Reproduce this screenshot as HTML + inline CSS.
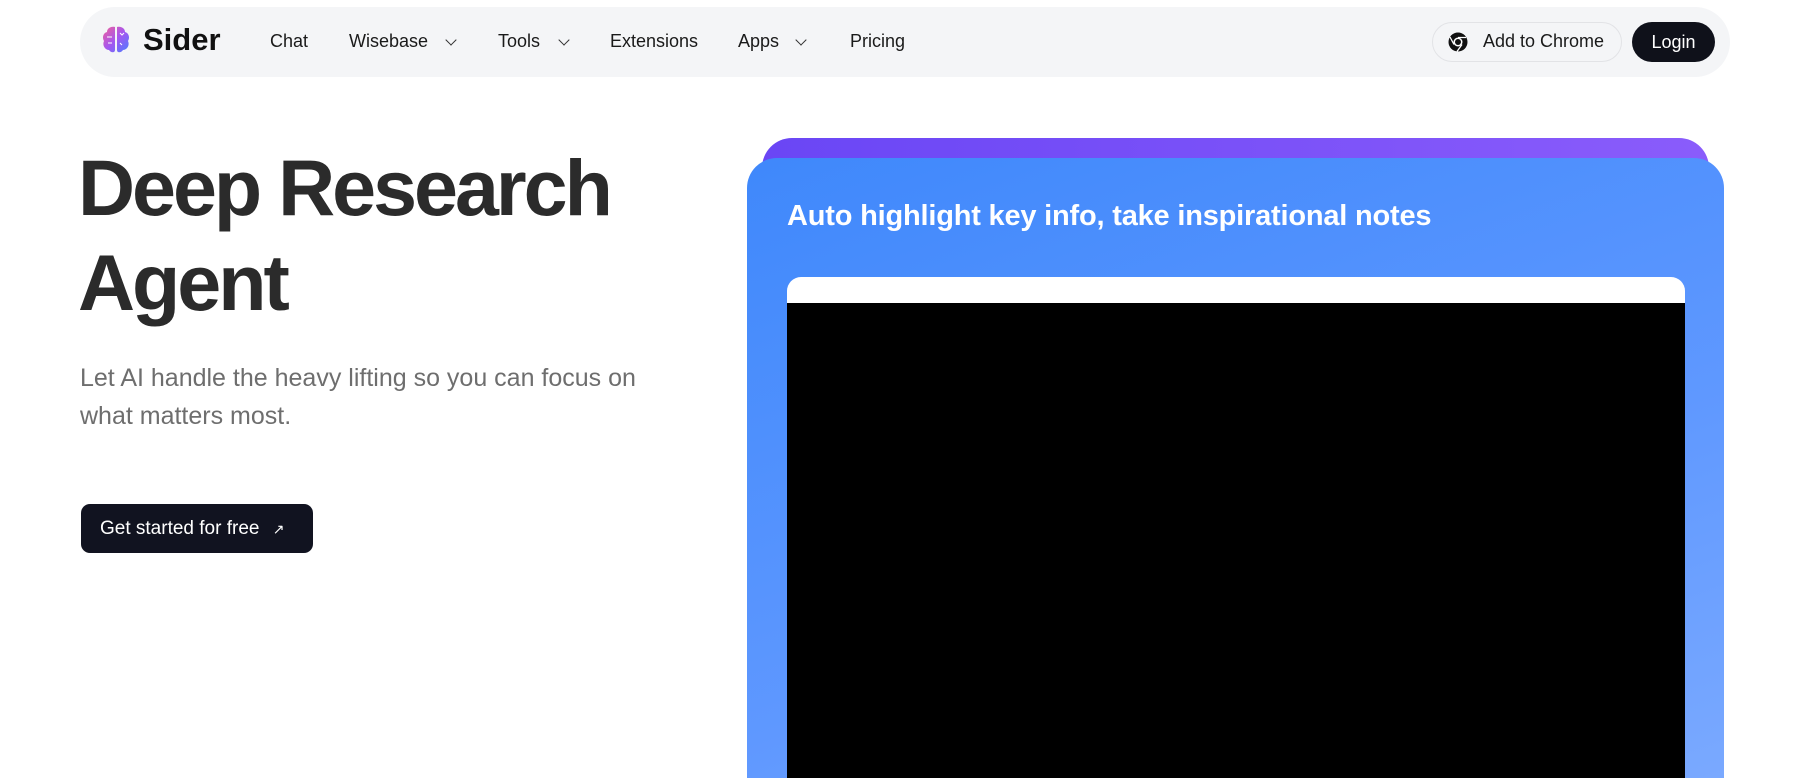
<!DOCTYPE html>
<html><head><meta charset="utf-8"><style>
*{margin:0;padding:0;box-sizing:border-box}
html,body{width:1796px;height:778px;overflow:hidden}
body{background:#fff;font-family:"Liberation Sans",sans-serif;color:#111;position:relative}
.nav{position:absolute;left:80px;top:7px;width:1650px;height:70px;background:#f4f5f7;border-radius:35px}
.a{position:absolute;font-size:18px;color:#1a1a1a;top:31px}
.chev{position:absolute;top:36px;width:8px;height:8px;border-right:1.6px solid #333;border-bottom:1.6px solid #333;transform:rotate(45deg)}
.h1{position:absolute;left:78px;top:140px;font-size:79px;font-weight:bold;letter-spacing:-3px;line-height:95px;color:#2b2b2b}
.sub{position:absolute;left:80px;top:359px;font-size:25px;line-height:38px;color:#6e6e6e;width:700px}
.btn{position:absolute;left:81px;top:504px;width:232px;height:49px;background:#111320;border-radius:9px;color:#fff;font-size:19px;line-height:49px;padding-left:19px}
</style></head><body>
<div class="nav"></div>
<svg style="position:absolute;left:102px;top:25px" width="28" height="28" viewBox="0 0 28 28"><defs><linearGradient id="g" x1="0" y1="0" x2="1" y2="1"><stop offset="0" stop-color="#f0609a"/><stop offset=".5" stop-color="#a457f0"/><stop offset="1" stop-color="#4a7dff"/></linearGradient></defs><path d="M13 2C8 1 5 4 5 7 1 8 0 13 2 16 0 20 3 25 7 25c2 3 6 3 6 0zM15 2c5-1 8 2 8 5 4 1 5 6 3 9 2 4-1 9-5 9-2 3-6 3-6 0z" fill="url(#g)"/><path d="M5 12h5M18 8l2 2 2-2M6 18h4M18 18l2 2" stroke="#fff" stroke-width="1" fill="none"/></svg>
<div style="position:absolute;left:143px;top:22px;font-size:31px;font-weight:bold;color:#111">Sider</div>
<div class="a" style="left:270px">Chat</div>
<div class="a" style="left:349px">Wisebase</div><div class="chev" style="left:447px"></div>
<div class="a" style="left:498px">Tools</div><div class="chev" style="left:560px"></div>
<div class="a" style="left:610px">Extensions</div>
<div class="a" style="left:738px">Apps</div><div class="chev" style="left:797px"></div>
<div class="a" style="left:850px">Pricing</div>
<div style="position:absolute;left:1432px;top:22px;width:190px;height:40px;border:1px solid #e2e3e6;border-radius:20px"></div>
<svg style="position:absolute;left:1448px;top:32px" width="20" height="20" viewBox="0 0 20 20"><circle cx="10" cy="10" r="9.5" fill="#111"/><circle cx="10" cy="10" r="4.5" fill="#fff"/><circle cx="10" cy="10" r="3" fill="#111"/><path d="M10 5.5h8M6 12.5L2 5M14 12.5l-5 7" stroke="#fff" stroke-width="1.3"/></svg>
<div class="a" style="left:1483px;top:31px">Add to Chrome</div>
<div style="position:absolute;left:1632px;top:22px;width:83px;height:40px;background:#0f111a;border-radius:20px;color:#fff;font-size:18px;line-height:40px;text-align:center">Login</div>
<div class="h1">Deep Research<br>Agent</div>
<div class="sub">Let AI handle the heavy lifting so you can focus on<br>what matters most.</div>
<div class="btn">Get started for free <span style="font-size:14px;margin-left:8px">↗</span></div>
<div style="position:absolute;left:762px;top:138px;width:947px;height:80px;border-radius:30px 30px 0 0;background:linear-gradient(90deg,#6a46f5,#8a5cfb)"></div>
<div style="position:absolute;left:747px;top:158px;width:977px;height:620px;border-radius:30px 30px 0 0;background:linear-gradient(160deg,#3f88fb,#5f98ff 60%,#7aa9ff)"></div>
<div style="position:absolute;left:787px;top:200px;font-size:29px;font-weight:bold;color:#fff;letter-spacing:-0.2px">Auto highlight key info, take inspirational notes</div>
<div style="position:absolute;left:787px;top:277px;width:898px;height:501px;background:#fff;border-radius:14px 14px 0 0"></div>
<div style="position:absolute;left:787px;top:303px;width:898px;height:475px;background:#000"></div>
</body></html>
